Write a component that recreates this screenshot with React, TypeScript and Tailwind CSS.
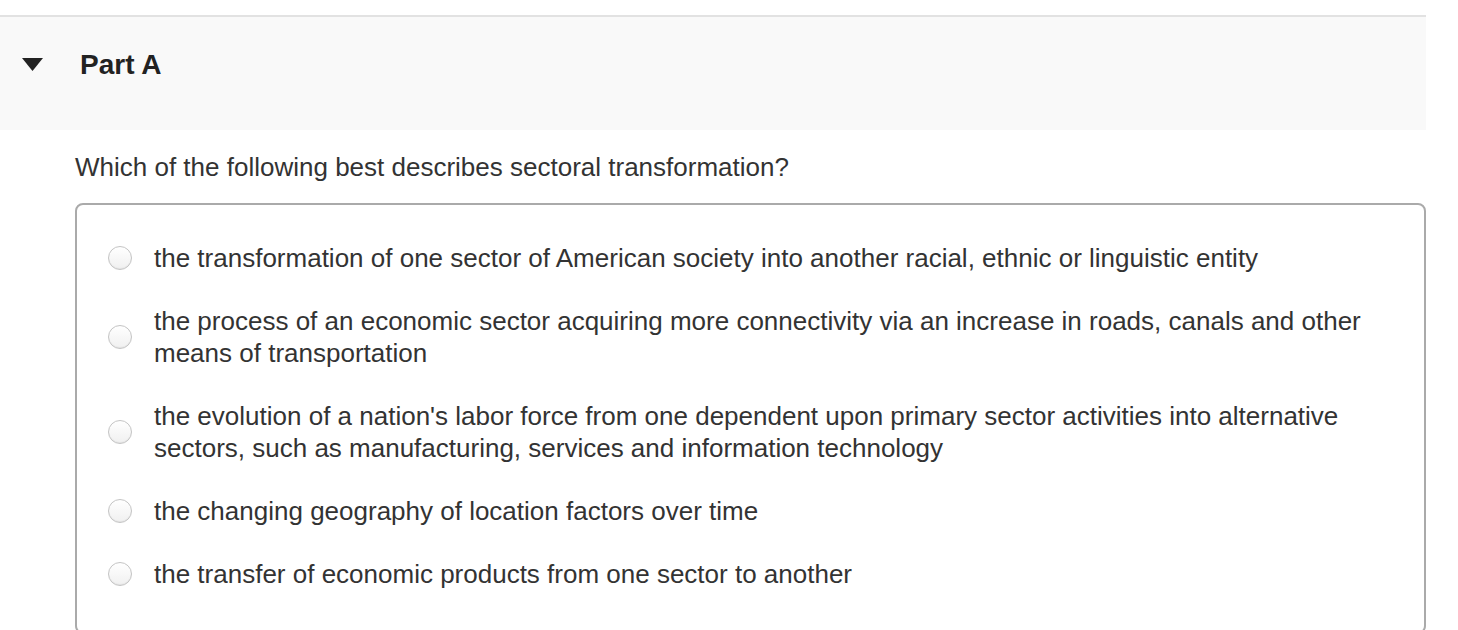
import React from "react";

const options = [
  "the transformation of one sector of American society into another racial, ethnic or linguistic entity",
  "the process of an economic sector acquiring more connectivity via an increase in roads, canals and other means of transportation",
  "the evolution of a nation's labor force from one dependent upon primary sector activities into alternative sectors, such as manufacturing, services and information technology",
  "the changing geography of location factors over time",
  "the transfer of economic products from one sector to another",
];

function Radio() {
  return (
    <span className="shrink-0 w-[24px] h-[24px] rounded-full border border-[#c4c4c4] bg-gradient-to-b from-white to-[#f0f0f0] shadow-[inset_0_-1px_1px_rgba(0,0,0,0.05)]" />
  );
}

export default function App() {
  return (
    <div
      className="w-[1458px] h-[630px] bg-white overflow-hidden pt-[15px] text-[#333]"
      style={{ fontFamily: '"Liberation Sans", Arial, Helvetica, sans-serif' }}
    >
      <div className="w-[1426px] h-[115px] border-t-2 border-[#e2e2e2] bg-[#f9f9f9] flex items-start pt-[31px]">
        <svg width="21" height="13" viewBox="0 0 21 13" className="ml-[22px] mt-[10px]">
          <polygon points="0,0 21,0 10.5,13" fill="#222" />
        </svg>
        <span className="ml-[37px] text-[28px] leading-[34px] font-bold text-[#222]">Part A</span>
      </div>
      <div className="w-[1426px] pl-[75px]">
        <p className="mt-[21px] text-[26px] leading-[32px]">
          Which of the following best describes sectoral transformation?
        </p>
        <div className="mt-[20px] border-2 border-[#aaaaaa] rounded-[8px] pt-[37px] pb-[42px] pl-[31px] pr-[40px] flex flex-col gap-[31px]">
          {options.map((o, i) => (
            <label key={i} className="flex items-center gap-[22px]">
              <Radio />
              <span className="text-[26px] leading-[32px]">{o}</span>
            </label>
          ))}
        </div>
      </div>
    </div>
  );
}
